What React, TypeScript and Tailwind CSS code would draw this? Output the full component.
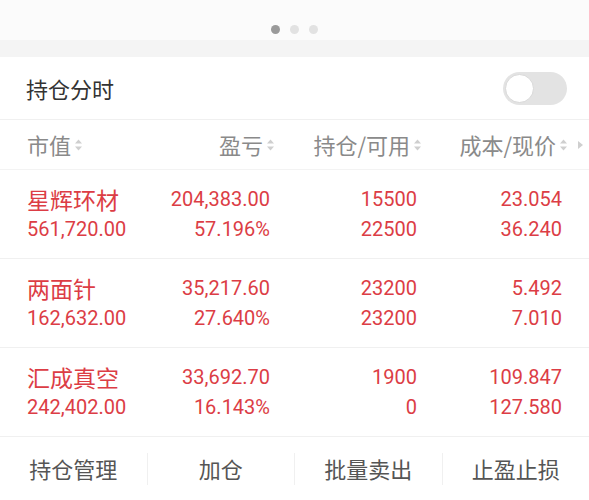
import React from "react";

const rows = [
  { name: "星辉环材", value: "561,720.00", pl: "204,383.00", plPct: "57.196%", hold: "15500", avail: "22500", cost: "23.054", price: "36.240" },
  { name: "两面针", value: "162,632.00", pl: "35,217.60", plPct: "27.640%", hold: "23200", avail: "23200", cost: "5.492", price: "7.010" },
  { name: "汇成真空", value: "242,402.00", pl: "33,692.70", plPct: "16.143%", hold: "1900", avail: "0", cost: "109.847", price: "127.580" },
];

const cjk = { fontFamily: '"Noto Sans CJK SC", "Noto Sans", sans-serif' };
const num = { fontFamily: 'Roboto, "Noto Sans CJK SC", sans-serif' };

function SortIcon() {
  return (
    <svg width="9" height="14" viewBox="0 0 9 14" className="ml-[3px]">
      <path d="M4.5 1.5 L8 5.5 H1 Z" fill="#cfcfcf" />
      <path d="M4.5 12.5 L8 8.5 H1 Z" fill="#cfcfcf" />
    </svg>
  );
}

function Header() {
  return (
    <div className="flex h-[50px] items-center border-b border-[#f3f3f3] text-[22px] text-[#8a8a8a]" style={cjk}>
      <div className="flex w-[150px] items-center pl-[27px]">
        市值
        <SortIcon />
      </div>
      <div className="flex w-[125px] items-center justify-end">
        盈亏
        <SortIcon />
      </div>
      <div className="flex w-[147px] items-center justify-end">
        持仓/可用
        <SortIcon />
      </div>
      <div className="flex w-[146px] items-center justify-end">
        成本/现价
        <SortIcon />
      </div>
      <svg width="7" height="10" viewBox="0 0 7 10" className="ml-[9px]">
        <path d="M1 1 L6 5 L1 9 Z" fill="#cfcfcf" />
      </svg>
    </div>
  );
}

function Row({ r }: { r: (typeof rows)[number] }) {
  return (
    <div className="flex h-[89px] items-center border-b border-[#f0f0f0] text-[#dc3d45]">
      <div className="flex w-[150px] flex-col gap-[6px] pl-[27px]">
        <div className="text-[23px] leading-[24px]" style={cjk}>
          {r.name}
        </div>
        <div className="text-[20px] leading-[24px]" style={num}>
          {r.value}
        </div>
      </div>
      <div className="flex w-[120px] flex-col items-end gap-[6px] text-[20px] leading-[24px]" style={num}>
        <div>{r.pl}</div>
        <div>{r.plPct}</div>
      </div>
      <div className="flex w-[147px] flex-col items-end gap-[6px] text-[20px] leading-[24px]" style={num}>
        <div>{r.hold}</div>
        <div>{r.avail}</div>
      </div>
      <div className="flex w-[145px] flex-col items-end gap-[6px] text-[20px] leading-[24px]" style={num}>
        <div>{r.cost}</div>
        <div>{r.price}</div>
      </div>
    </div>
  );
}

export default function App() {
  const actions = ["持仓管理", "加仓", "批量卖出", "止盈止损"];
  return (
    <div className="h-[500px] w-[589px] overflow-hidden bg-white">
      <div className="flex h-[40px] items-center justify-center gap-[10px] bg-[#fbfbfb] pt-[18px]">
        <span className="h-[9px] w-[9px] rounded-full bg-[#9a9a9a]" />
        <span className="h-[9px] w-[9px] rounded-full bg-[#e2e2e2]" />
        <span className="h-[9px] w-[9px] rounded-full bg-[#e2e2e2]" />
      </div>
      <div className="h-[17px] bg-[#f4f4f4]" />
      <div className="flex h-[63px] items-center justify-between border-b border-[#f0f0f0] pl-[26px] pr-[22px]">
        <span className="text-[22px] text-[#333]" style={cjk}>
          持仓分时
        </span>
        <div className="flex h-[33px] w-[64px] items-center rounded-full bg-[#e3e3e3] px-[2px]">
          <div className="h-[29px] w-[29px] rounded-full border border-[#d8d8d8] bg-white" />
        </div>
      </div>
      <Header />
      {rows.map((r) => (
        <Row key={r.name} r={r} />
      ))}
      <div className="flex h-[63px] items-center text-[22px] text-[#555]" style={cjk}>
        {actions.map((a, i) => (
          <React.Fragment key={a}>
            {i > 0 && <div className="h-[32px] w-px bg-[#f0f0f0]" />}
            <div className="flex flex-1 justify-center">{a}</div>
          </React.Fragment>
        ))}
      </div>
    </div>
  );
}
